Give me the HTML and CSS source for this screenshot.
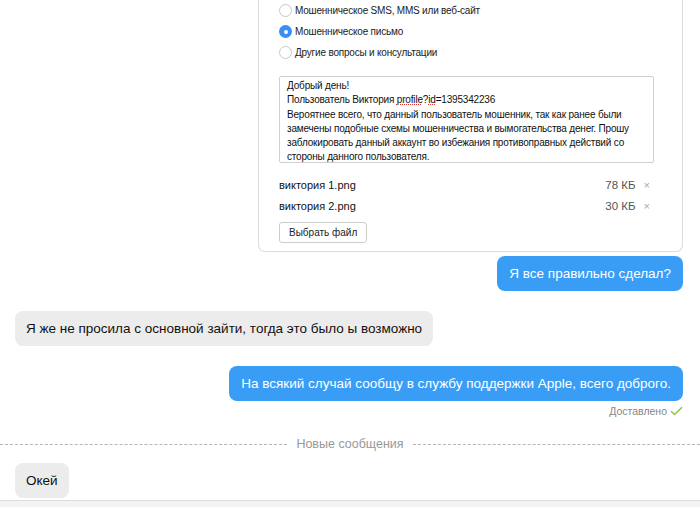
FILE: index.html
```html
<!DOCTYPE html>
<html>
    <head>
        <meta charset="utf-8" />
        <title>Чат поддержки</title>
        <link rel="stylesheet" href="styles.css">
    </head>
    <body>
        <div class="chat">
            <div class="form_card">
                <label class="radio_row"><span class="radio"></span>Мошенническое SMS, MMS или веб-сайт</label>
                <label class="radio_row"><span class="radio checked"></span>Мошенническое письмо</label>
                <label class="radio_row"><span class="radio"></span>Другие вопросы и консультации</label>
                <div class="text_box">
                    Добрый день!<br>
                    Пользователь Виктория <span class="typo">profile</span>?<span class="typo">id</span>=1395342236<br>
                    Вероятнее всего, что данный пользователь мошенник, так как ранее были<br>
                    замечены подобные схемы мошенничества и вымогательства денег. Прошу<br>
                    заблокировать данный аккаунт во избежания противоправных действий со<br>
                    стороны данного пользователя.
                </div>
                <div class="file_row">
                    <span class="file_name">виктория 1.png</span>
                    <span class="file_size">78 КБ</span>
                    <span class="file_del">×</span>
                </div>
                <div class="file_row">
                    <span class="file_name">виктория 2.png</span>
                    <span class="file_size">30 КБ</span>
                    <span class="file_del">×</span>
                </div>
                <button class="file_btn">Выбрать файл</button>
            </div>

            <div class="msg out first">Я все правильно сделал?</div>
            <div class="msg in">Я же не просила с основной зайти, тогда это было ы возможно</div>
            <div class="msg out">На всякий случай сообщу в службу поддержки Apple, всего доброго.</div>
            <div class="status">Доставлено
                <svg width="13" height="10" viewBox="0 0 13 10"><path d="M1 5.2 L4.6 8.6 L12 1.2" fill="none" stroke="#8cc63f" stroke-width="1.4"/></svg>
            </div>

            <div class="divider">
                <span class="dash"></span>
                <span class="divider_text">Новые сообщения</span>
                <span class="dash"></span>
            </div>

            <div class="msg in last">Окей</div>
        </div>
        <div class="footer_bar"></div>
    </body>
</html>
```

FILE: styles.css
```css
html, body{
    margin: 0;
    height: 100%;
    overflow: hidden;
}
body{
    background: #fff;
    font-family: "Liberation Sans", Arial, sans-serif;
    color: #222;
}
.chat{
    display: flex;
    flex-direction: column;
    padding: 0 17px 0 15px;
}
/*форма жалобы сверху*/
.form_card{
    align-self: flex-end;
    width: 375px;
    padding: 0 28px 8px 20px;
    border: 1px solid #dcdcdc;
    border-top: none;
    border-radius: 0 0 7px 7px;
    display: flex;
    flex-direction: column;
    align-items: flex-start;
}
.radio_row{
    display: flex;
    align-items: center;
    height: 21px;
    font-size: 10px;
    letter-spacing: -0.2px;
    color: #222;
}
.radio{
    width: 13px;
    height: 13px;
    border: 1px solid #c8c8c8;
    border-radius: 50%;
    margin-right: 3px;
    background: #fff;
    box-sizing: border-box;
    position: relative;
}
.radio.checked{
    border: none;
    background: #3b8ef3;
}
.radio.checked::after{
    content: "";
    position: absolute;
    left: 4.5px;
    top: 4.5px;
    width: 4px;
    height: 4px;
    border-radius: 50%;
    background: #fff;
}
.text_box{
    margin-top: 13px;
    width: 375px;
    height: 87px;
    box-sizing: border-box;
    border: 1px solid #cfcfcf;
    border-radius: 2px;
    padding: 2px 7px 0;
    font-size: 10px;
    letter-spacing: -0.18px;
    line-height: 14.3px;
    color: #111;
    white-space: nowrap;
    overflow: hidden;
}
.typo{
    text-decoration: underline dotted #e03030;
}
.file_row{
    display: flex;
    align-items: center;
    width: 375px;
    height: 21px;
    font-size: 11px;
}
.text_box + .file_row{
    margin-top: 11px;
}
.file_name{
    flex: 1;
    color: #111;
}
.file_size{
    color: #555;
    font-size: 11.5px;
}
.file_del{
    color: #aaa;
    font-size: 11px;
    margin: 0 4px 0 8px;
}
.file_btn{
    margin-top: 6px;
    height: 21px;
    padding: 0 9px;
    font-family: "Liberation Sans", Arial, sans-serif;
    font-size: 10px;
    color: #222;
    background: #fff;
    border: 1px solid #cdcdcd;
    border-radius: 3px;
}
/*сообщения*/
.msg{
    height: 35px;
    line-height: 35px;
    padding: 0 12px;
    border-radius: 8px;
    font-size: 13.5px;
    margin-top: 20px;
    white-space: nowrap;
}
.msg.first{
    margin-top: 4px;
}
.msg.out{
    align-self: flex-end;
    background: #3a9df5;
    color: #fff;
}
.msg.in{
    align-self: flex-start;
    background: #ececec;
    color: #111;
    padding: 0 11px;
}
.status{
    align-self: flex-end;
    font-size: 10.5px;
    color: #888;
    margin-top: 4px;
    display: flex;
    align-items: center;
    gap: 3px;
}
.divider{
    display: flex;
    align-items: center;
    margin: 20px -17px 0 -15px;
    gap: 9px;
}
.dash{
    flex: 1;
    border-top: 1px dashed #b5b5b5;
}
.divider_text{
    font-size: 12.5px;
    color: #999;
}
.msg.last{
    margin-top: 12px;
}
.footer_bar{
    position: fixed;
    left: 0;
    right: 0;
    bottom: 0;
    height: 6px;
    background: #f3f3f3;
    border-top: 1px solid #dcdcdc;
}
```
